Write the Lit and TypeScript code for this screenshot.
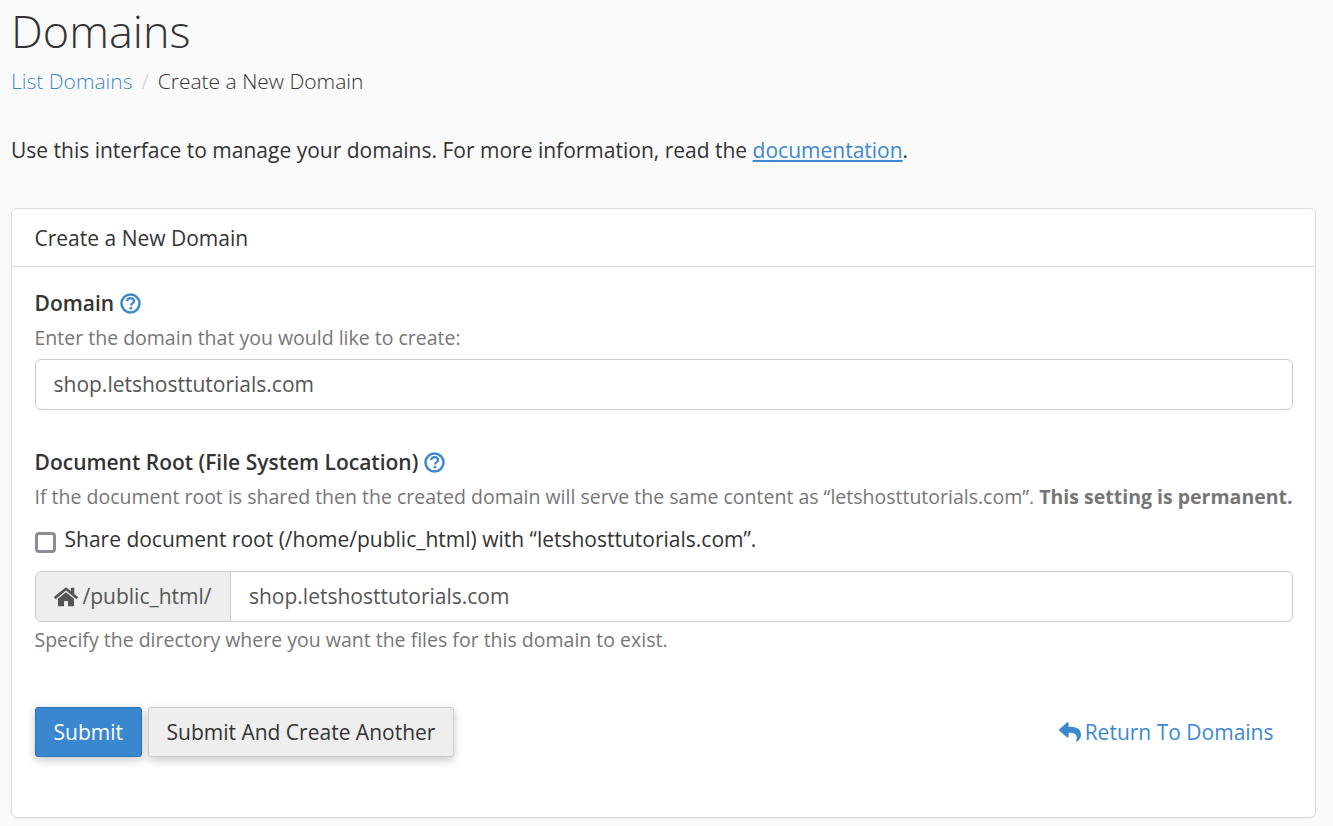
import { css, html, LitElement } from "lit";
import { customElement } from "lit/decorators.js";

const helpIcon = html`<svg class="help" viewBox="0 0 20 20" width="21" height="21">
    <circle cx="10" cy="10" r="8.6" fill="none" stroke="#3d88cf" stroke-width="2.400"></circle>
    <path d="M6.800 7.800c.2-2 1.500-3 3.300-3 1.800 0 3.200 1.100 3.200 2.700 0 1.200-.6 1.800-1.500 2.400-.8.500-1.100.900-1.100 1.700v.3" fill="none" stroke="#3d88cf" stroke-width="2.200"></path>
    <rect x="9.200" y="13.200" width="2.400" height="2.400" fill="#3d88cf"></rect>
</svg>`;

@customElement("app-root")
export class AppRoot extends LitElement {
    render() {
        return html`
            <div class="page">
                <h1>Domains</h1>
                <nav class="crumbs">
                    <a href="#">List Domains</a>
                    <span class="sep">/</span>
                    <span>Create a New Domain</span>
                </nav>
                <p class="intro">Use this interface to manage your domains. For more information, read the <a class="doc" href="#">documentation</a>.</p>

                <section class="card">
                    <header>Create a New Domain</header>
                    <div class="body">
                        <div class="label">Domain ${helpIcon}</div>
                        <div class="hint">Enter the domain that you would like to create:</div>
                        <div class="field">shop.letshosttutorials.com</div>

                        <div class="label second">Document Root (File System Location) ${helpIcon}</div>
                        <div class="hint">If the document root is shared then the created domain will serve the same content as “letshosttutorials.com”. <b>This setting is permanent.</b></div>
                        <label class="share">
                            <span class="check"></span>
                            <span>Share document root (/home/public_html) with “letshosttutorials.com”.</span>
                        </label>
                        <div class="group">
                            <div class="addon">
                                <svg viewBox="0 0 576 512" width="24" height="22"><path fill="#555" d="M280.400 148.300 96 300.100V464a16 16 0 0 0 16 16l112-.3a16 16 0 0 0 15.900-16V368a16 16 0 0 1 16-16h64a16 16 0 0 1 16 16v95.600a16 16 0 0 0 16 16.100l112 .3a16 16 0 0 0 16-16V300L295.700 148.300a12.200 12.200 0 0 0-15.300 0zM571.600 251.500 488 182.600V44.100a12 12 0 0 0-12-12h-56a12 12 0 0 0-12 12v72.600L318.500 43a48 48 0 0 0-61 0L4.300 251.500a12 12 0 0 0-1.600 16.900l25.500 31A12 12 0 0 0 45.200 301l235.200-193.700a12.200 12.200 0 0 1 15.300 0L530.900 301a12 12 0 0 0 16.900-1.600l25.500-31a12 12 0 0 0-1.700-16.900z"></path></svg>
                                <span>/public_html/</span>
                            </div>
                            <div class="value">shop.letshosttutorials.com</div>
                        </div>
                        <div class="hint after">Specify the directory where you want the files for this domain to exist.</div>

                        <div class="actions">
                            <button class="primary">Submit</button>
                            <button class="secondary">Submit And Create Another</button>
                            <a class="back" href="#">
                                <svg viewBox="0 0 512 512" width="22" height="22"><path fill="#3d88cf" d="M8.300 189.800 184.300 37.800C199.700 24.500 224 35.300 224 56v80.100c160.600 1.800 288 34 288 186.300 0 61.400-39.600 122.300-83.300 154.100-13.700 9.900-33.100-2.500-28.100-18.600 45.300-144.700-21.500-183.200-176.600-185.400V360c0 20.700-24.300 31.500-39.700 18.200l-176-152c-11.100-9.600-11.100-26.800 0-36.400z"></path></svg>
                                <span>Return To Domains</span>
                            </a>
                        </div>
                    </div>
                </section>
            </div>
        `;
    }

    static styles = css`
      :host {
        display: block;
        min-height: 826px;
        background: #fafafa;
        font-family: "Open Sans", sans-serif;
        font-size: 21px;
        line-height: 30px;
        color: #333;
      }

      .page {
        padding: 0 17px 0 11px;
      }

      h1 {
        margin: 0;
        font-size: 45px;
        font-weight: 300;
        line-height: 62px;
        color: #333;
      }

      a {
        color: #3d88cf;
        text-decoration: none;
      }

      .crumbs {
        margin-top: 4px;
        display: flex;
        font-weight: 300;
      }

      .sep {
        color: #ccc;
        padding: 0 9px;
      }

      .intro {
        margin: 39px 0 43px;
      }

      .doc {
        text-decoration: underline;
      }

      .card {
        background: #fff;
        border: 1px solid #ddd;
        border-radius: 6px;
        box-shadow: 0 1px 1px rgba(0, 0, 0, 0.05);
      }

      header {
        padding: 13.5px 22.5px;
        border-bottom: 1px solid #ddd;
      }

      .body {
        padding: 21px 22px 60px 22.5px;
      }

      .label {
        display: flex;
        align-items: center;
        gap: 6px;
        font-weight: 600;
      }

      .label.second {
        margin-top: 37px;
      }

      .help {
        flex: none;
      }

      .hint {
        margin-top: 6px;
        font-size: 19.5px;
        line-height: 28px;
        color: #767676;
        white-space: nowrap;
      }

      .hint b {
        font-weight: 700;
      }

      .hint.after {
        margin-top: 4px;
      }

      .field,
      .group {
        box-sizing: border-box;
        height: 51px;
        border: 1px solid #ccc;
        border-radius: 6px;
        background: #fff;
        color: #555;
      }

      .field {
        margin-top: 7px;
        padding: 8.5px 18px;
      }

      .share {
        display: flex;
        align-items: center;
        gap: 9px;
        margin-top: 13px;
      }

      .check {
        box-sizing: border-box;
        width: 21px;
        height: 21px;
        margin-top: 7px;
        border: 3px solid #8d8d99;
        border-radius: 4px;
        background: #fff;
      }

      .group {
        display: flex;
        margin-top: 17px;
        overflow: hidden;
      }

      .addon {
        display: flex;
        align-items: center;
        gap: 5px;
        padding: 0 18.5px 0 18px;
        background: #eee;
        border-right: 1px solid #ccc;
      }

      .addon span {
        margin-top: -2px;
      }

      .value {
        padding: 8.5px 18px;
      }

      .actions {
        display: flex;
        align-items: center;
        gap: 6px;
        margin-top: 53px;
      }

      button {
        box-sizing: border-box;
        height: 50px;
        padding: 0 18px;
        border-radius: 3px;
        font: inherit;
        box-shadow: 0 3px 10px rgba(0, 0, 0, 0.22);
      }

      .primary {
        background: #3a87cf;
        border: 1px solid #2f73b5;
        color: #fff;
      }

      .secondary {
        padding: 0 17.5px;
        background: #eee;
        border: 1px solid #ccc;
        color: #333;
      }

      .back {
        margin-left: auto;
        margin-right: 19.5px;
        display: flex;
        align-items: center;
        gap: 4px;
      }
    `
}
